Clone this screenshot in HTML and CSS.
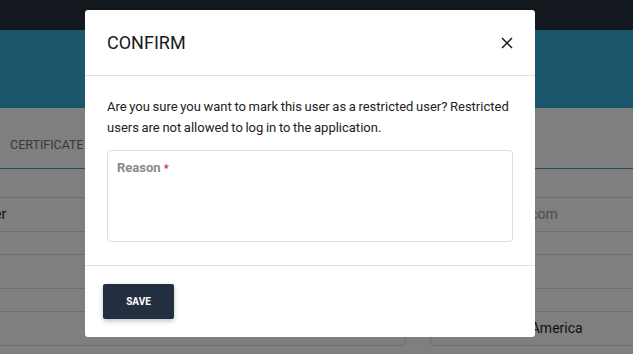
FILE: index.html
```html
<!DOCTYPE html>
<html lang="en">

<head>
    <meta charset="UTF-8" />
    <title>Confirm</title>
    <link rel="stylesheet" href="styles.css">
</head>

<body>
    <header class="topbar"></header>
    <section class="banner"></section>

    <nav class="tabs">
        <span class="tab">CERTIFICATE</span>
    </nav>

    <div class="fields">
        <div class="field">Manager</div>
        <div class="field muted">name@corp.com</div>
        <div class="field"></div>
        <div class="field"></div>
        <div class="field"></div>
        <div class="field country"><span class="flag"></span>Northern America</div>
    </div>

    <div class="backdrop">
        <div class="modal">
            <div class="modal-header">
                <h2>CONFIRM</h2>
                <button class="close" aria-label="Close">
                    <svg width="12" height="12" viewBox="0 0 12 12">
                        <path d="M1 1 L11 11 M11 1 L1 11" stroke="#1a1a1a" stroke-width="1.5" fill="none" />
                    </svg>
                </button>
            </div>
            <div class="modal-body">
                <p>Are you sure you want to mark this user as a restricted user? Restricted users are not allowed to log in to the application.</p>
                <div class="reason">
                    <label>Reason <span class="req">*</span></label>
                </div>
            </div>
            <div class="modal-footer">
                <button class="save">SAVE</button>
            </div>
        </div>
    </div>
</body>

</html>
```

FILE: styles.css
```css
* {
    box-sizing: border-box;
}

body {
    margin: 0;
    font-family: Roboto, 'Liberation Sans', sans-serif;
    background: #fff;
    color: #222;
    overflow: hidden;
    height: 354px;
}

.topbar {
    height: 30px;
    background: #26303e;
}

.banner {
    height: 78px;
    background: #34aed8;
}

.tabs {
    height: 61px;
    border-bottom: 1px solid #34a0c8;
    padding: 26px 10px 0;
}

.tab {
    font-size: 12.5px;
    color: #737373;
}

.fields {
    display: grid;
    grid-template-columns: 468px 1fr;
    column-gap: 24px;
    row-gap: 22px;
    margin: 28px -20px 0 -62px;
}

.field {
    height: 35px;
    border: 1px solid #dcdcdc;
    border-radius: 4px;
    padding: 0 12px;
    font-size: 14px;
    line-height: 33px;
    color: #222;
    white-space: nowrap;
}

.field.muted {
    color: #9a9a9a;
    padding-left: 20px;
}

.flag {
    display: inline-block;
    width: 18px;
    height: 12px;
    margin-right: 11px;
    vertical-align: -1px;
    background: #c8c8c8;
}

.backdrop {
    position: fixed;
    inset: 0;
    background: rgba(0, 0, 0, 0.5);
}

.modal {
    position: absolute;
    left: 85px;
    top: 10px;
    width: 450px;
    background: #fff;
    border-radius: 3px;
}

.modal-header {
    height: 66px;
    display: flex;
    align-items: center;
    justify-content: space-between;
    padding: 0 22px;
    border-bottom: 1px solid #e2e2e2;
}

.modal-header h2 {
    margin: 0;
    font-size: 18px;
    font-weight: 400;
    color: #1a1a1a;
}

.close {
    background: none;
    border: none;
    padding: 0;
    width: 12px;
    height: 12px;
    display: flex;
    cursor: pointer;
}

.modal-body {
    padding: 20px 22px 23px;
    border-bottom: 1px solid #e2e2e2;
}

.modal-body p {
    margin: 0 0 12px;
    font-size: 13px;
    word-spacing: -0.6px;
    line-height: 21px;
    color: #222;
}

.reason {
    height: 92px;
    border: 1px solid #dedede;
    border-radius: 4px;
    padding: 6px 9px;
}

.reason label {
    font-size: 13px;
    font-weight: 700;
    color: #8a8a8a;
}

.req {
    color: #d32f2f;
    font-size: 11px;
}

.modal-footer {
    padding: 18px;
}

.save {
    width: 71px;
    height: 35px;
    background: #232f40;
    color: #fff;
    border: none;
    border-radius: 2px;
    font-family: Roboto, sans-serif;
    font-size: 10px;
    font-weight: 700;
    box-shadow: 0 2px 5px rgba(0, 0, 0, 0.25);
    cursor: pointer;
}
```
